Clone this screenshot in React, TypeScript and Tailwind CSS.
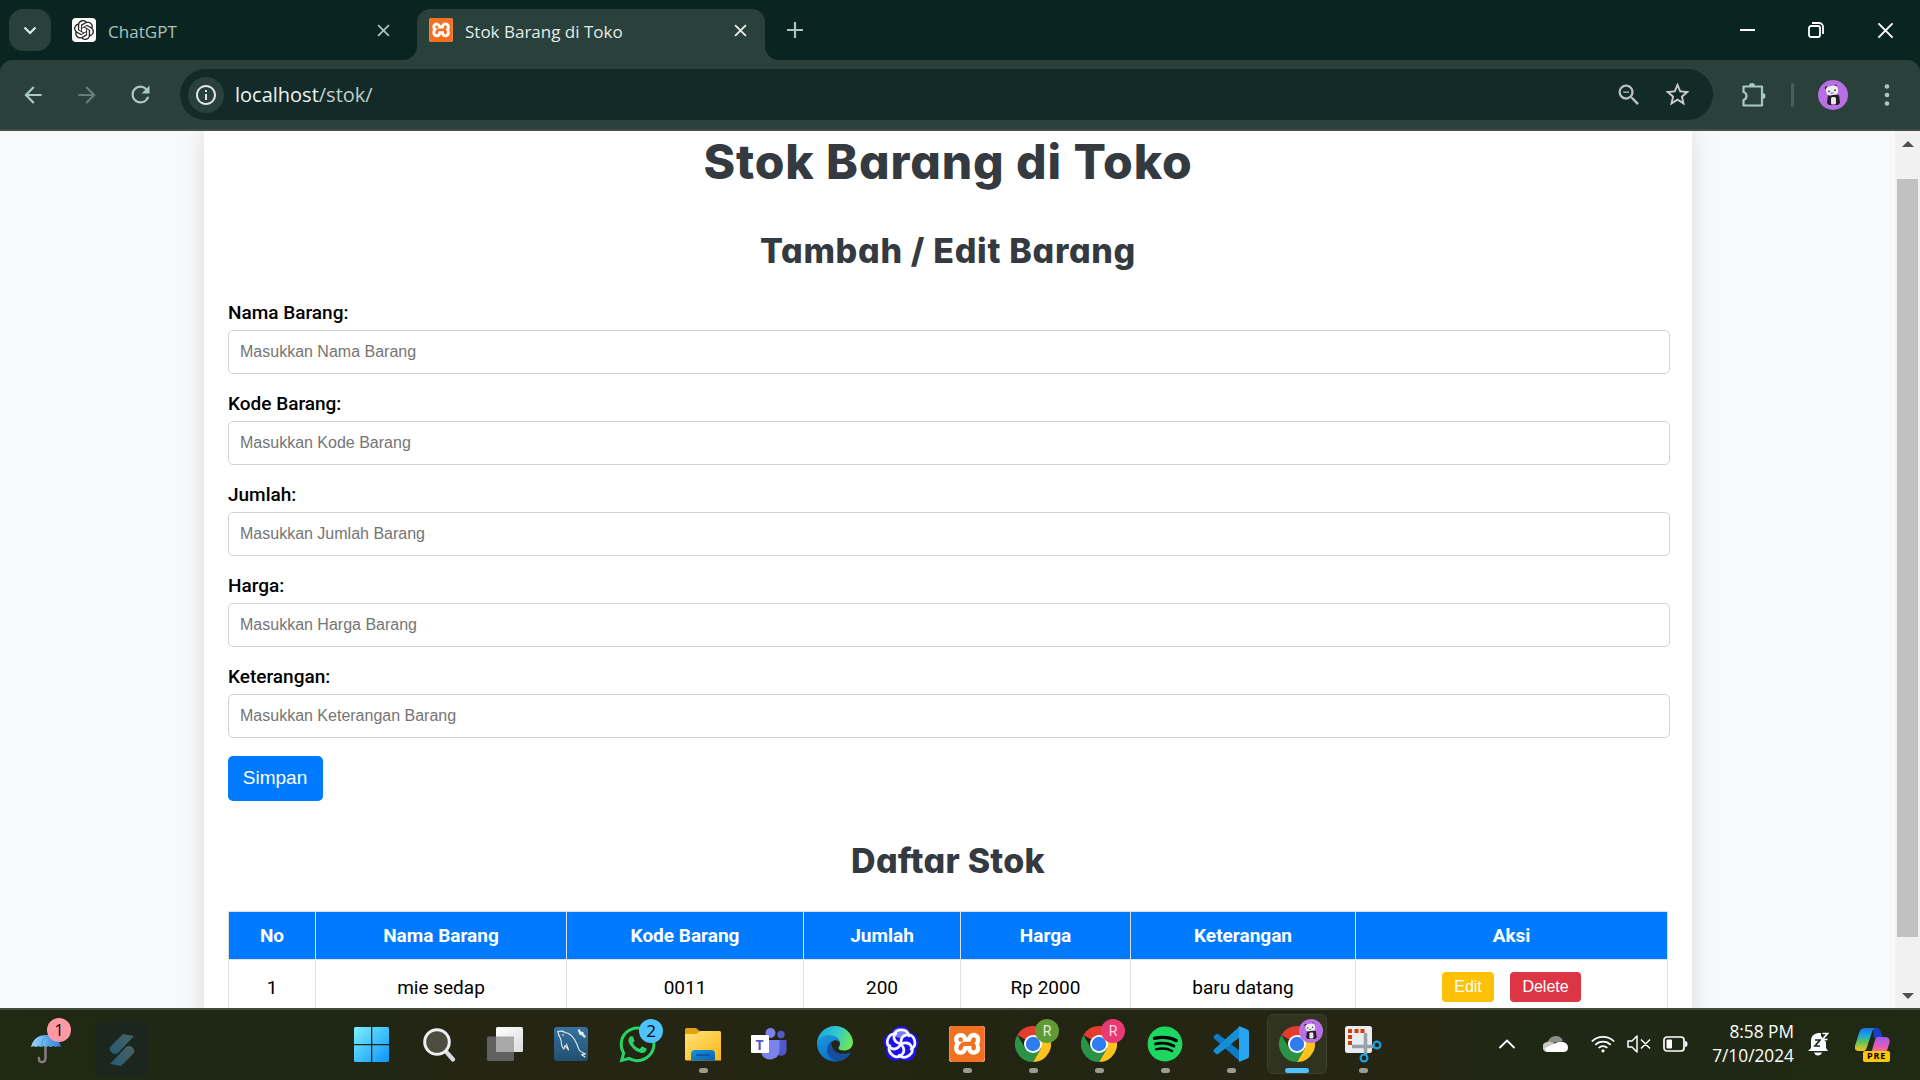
import type { ReactNode } from "react";
import { MdArrowBack, MdArrowForward, MdRefresh, MdInfoOutline, MdStarOutline, MdZoomOut } from "react-icons/md";
import { FaWhatsapp, FaSpotify } from "react-icons/fa";
import { SiOpenai, SiXampp } from "react-icons/si";

const Cross = ({ size, width, className }: { size: number; width: number; className?: string }) => (
  <svg width={size} height={size} viewBox="0 0 12 12" className={className}>
    <path d="M1 1l10 10M11 1L1 11" stroke="currentColor" strokeWidth={width} fill="none" />
  </svg>
);

const Xampp = ({ size }: { size: number }) => (
  <div className="flex items-center justify-center rounded-[3px] bg-white" style={{ width: size, height: size }}>
    <SiXampp size={size} color="#f37021" />
  </div>
);

const Panda = ({ size }: { size: number }) => (
  <svg width={size} height={size} viewBox="0 0 30 30">
    <circle cx="15" cy="15" r="15" fill="#b76fe3" />
    <circle cx="8.500" cy="8" r="1.700" fill="#2a2430" />
    <circle cx="17.500" cy="6" r="1.500" fill="#2a2430" />
    <path d="M10 15h11l1 8-2 2H11l-2-2z" fill="#221e26" />
    <rect x="13" y="17" width="5" height="7.500" rx="1.500" fill="#e9e6ee" />
    <rect x="8" y="6" width="12" height="9" rx="3.500" fill="#eeecf2" transform="rotate(-12 14 10)" />
    <circle cx="11" cy="11.300" r="0.900" fill="#333" />
    <circle cx="17" cy="10.200" r="0.900" fill="#333" />
    <path d="M12.500 13q2 .8 3-.6" stroke="#444" strokeWidth="0.800" fill="none" />
  </svg>
);

function TabStrip() {
  return (
    <div className="flex h-[60px] bg-[#0a2422] text-[#a9c4be]">
      <div className="ml-[9px] mt-[9px] flex h-[42px] w-[42px] items-center justify-center rounded-[14px] bg-[#29403b]">
        <svg width="14" height="9" viewBox="0 0 14 9">
          <path d="M1.500 1.500L7 7l5.500-5.500" stroke="#dcebe6" strokeWidth="2.200" fill="none" />
        </svg>
      </div>
      <div className="ml-[21px] flex w-[345px] items-center">
        <div className="flex h-6 w-6 items-center justify-center rounded-[4px] bg-white text-[#222]">
          <SiOpenai size={20} />
        </div>
        <span className="ml-3 pt-[3px] text-[17px] tracking-[0.05px]">ChatGPT</span>
        <Cross size={13} width={1.6} className="ml-auto mr-[27px]" />
      </div>
      <div className="relative -mr-px mt-[9px] flex h-[51px] w-[348px] items-center rounded-t-[13px] bg-[#29403b] pb-[9px] text-[#e4ece9]">
        <svg width="14" height="14" className="absolute -left-[14px] bottom-0">
          <path d="M14 0v14H0A14 14 0 0 0 14 0z" fill="#29403b" />
        </svg>
        <svg width="14" height="14" className="absolute -right-[14px] bottom-0">
          <path d="M0 0v14h14A14 14 0 0 1 0 0z" fill="#29403b" />
        </svg>
        <div className="ml-3"><Xampp size={24} /></div>
        <span className="ml-3 pt-[3px] text-[17px]">Stok Barang di Toko</span>
        <Cross size={13} width={1.8} className="ml-auto mr-[18px]" />
      </div>
      <div className="ml-[23px] flex items-center">
        <svg width="16" height="16" viewBox="0 0 16 16"><path d="M8 0v16M0 8h16" stroke="currentColor" strokeWidth="2.200" /></svg>
      </div>
      <div className="ml-auto mr-[26px] flex items-center text-white">
        <div className="mr-[53px] h-[2px] w-[15px] bg-white" />
        <svg width="16" height="16" viewBox="0 0 16 16" className="mr-[53px]" fill="none" stroke="currentColor" strokeWidth="1.800">
          <rect x="1" y="4" width="11" height="11" rx="2" />
          <path d="M4 1h7a4 4 0 0 1 4 4v7" />
        </svg>
        <Cross size={17} width={1.4} />
      </div>
    </div>
  );
}

function Toolbar() {
  return (
    <div className="bg-[#0a2422]">
      <div className="flex h-[69px] items-center rounded-t-[12px] bg-[#29403b] text-[#a9c9c0]">
        <MdArrowBack size={26} className="ml-5" />
        <MdArrowForward size={26} className="ml-7 text-[#65807a]" />
        <MdRefresh size={27} className="ml-[27px]" />
        <div className="ml-[26px] flex h-[51px] w-[1533px] items-center rounded-full bg-[#122b28] pl-2">
          <div className="flex h-9 w-9 items-center justify-center rounded-full bg-[#29403b]">
            <MdInfoOutline size={24} color="#dfe6e4" />
          </div>
          <span className="ml-[11px] text-[20px] text-[#c3cecb]"><span className="text-[#eef3f2]">localhost</span>/stok/</span>
          <MdZoomOut size={28} color="#b9c2c0" className="ml-auto mr-5" />
          <MdStarOutline size={29} color="#c4cbc9" className="mr-[21px]" />
        </div>
        <svg width="26" height="26" viewBox="0 0 26 26" className="ml-[27px]">
          <path d="M3.500 4.500h18.500v19H3.500v-5.500q3-1 3-4t-3-4z" fill="none" stroke="currentColor" strokeWidth="2.200" strokeLinejoin="round" />
          <path d="M9 4a3 3 0 0 1 6 0zM22.500 11a3 3 0 0 1 0 6z" fill="currentColor" />
        </svg>
        <div className="ml-[25px] h-6 w-[3px] rounded bg-[#45605a]" />
        <div className="ml-6"><Panda size={30} /></div>
        <svg width="6" height="24" viewBox="0 0 6 24" className="ml-[36px]" fill="currentColor">
          <circle cx="3" cy="3.500" r="2.300" /><circle cx="3" cy="12" r="2.300" /><circle cx="3" cy="20.500" r="2.300" />
        </svg>
      </div>
      <div className="h-[2px] bg-[#454d4a]" />
    </div>
  );
}

const fields = ["Nama Barang", "Kode Barang", "Jumlah", "Harga", "Keterangan"];
const hints = ["Masukkan Nama Barang", "Masukkan Kode Barang", "Masukkan Jumlah Barang", "Masukkan Harga Barang", "Masukkan Keterangan Barang"];
const heads = ["No", "Nama Barang", "Kode Barang", "Jumlah", "Harga", "Keterangan", "Aksi"];
const cells = ["1", "mie sedap", "0011", "200", "Rp 2000", "baru datang"];
const cols = "grid grid-cols-[87px_251px_237px_157px_170px_225px_312px]";

function Page() {
  return (
    <div className="flex h-[877px] overflow-hidden bg-[#f8f9fb]">
      <div className="ml-[204px] h-[900px] w-[1488px] bg-white px-6 pt-[7px] text-black shadow-[0_0_24px_rgba(0,0,0,0.12)]">
        <h1 className="text-center font-['Inter'] text-[48px] font-extrabold leading-[48px] tracking-[0.900px] text-[#343a40] [font-feature-settings:'cv11']">Stok Barang di Toko</h1>
        <h2 className="mt-[48px] text-center font-['Inter'] text-[34px] font-extrabold leading-[34px] tracking-[0.700px] text-[#343a40] [font-feature-settings:'cv11']">Tambah / Edit Barang</h2>
        <form className="mt-[33px] w-[1442px]">
          {fields.map((f, i) => (
            <div key={f} className="mb-[18px]">
              <label className="mb-[5px] block font-['Roboto'] text-[19px] font-medium leading-6">{f}:</label>
              <input placeholder={hints[i]} className="block h-[44px] w-full rounded-[5px] border border-[#ced4da] bg-white px-[11px] pb-px font-['Liberation_Sans'] text-[16px] placeholder:text-[#757575]" />
            </div>
          ))}
          <button type="button" className="block h-[45px] w-[95px] rounded-[5px] bg-[#007bff] pr-px font-['Liberation_Sans'] text-[19px] text-white">Simpan</button>
        </form>
        <h2 className="mt-[43px] text-center font-['Inter'] text-[34px] font-extrabold leading-[34px] tracking-[0.250px] text-[#343a40] [font-feature-settings:'cv11']">Daftar Stok</h2>
        <div className="mt-[33px] w-[1440px] border-l border-t border-[#dee2e6] font-['Roboto'] text-[19px]">
          <div className={cols}>
            {heads.map((h) => (
              <div key={h} className="flex h-12 items-center justify-center border-b border-r border-[#dee2e6] bg-[#007bff] pt-[2px] font-bold text-white">{h}</div>
            ))}
          </div>
          <div className={cols}>
            {cells.map((c) => (
              <div key={c} className="flex h-[56px] items-center justify-center border-b border-r border-[#dee2e6] pt-[2px]">{c}</div>
            ))}
            <div className="flex h-[56px] items-center justify-center gap-4 border-r border-[#dee2e6] pb-[3px] font-['Liberation_Sans'] text-[16px] text-white">
              <button className="h-[30px] w-[52px] rounded-[4px] bg-[#ffc107] pt-px">Edit</button>
              <button className="h-[30px] w-[71px] rounded-[4px] bg-[#dc3545] pt-px">Delete</button>
            </div>
          </div>
        </div>
      </div>
      <div className="ml-auto flex h-[877px] w-[25px] flex-col items-center bg-[#f1f1f1]">
        <svg width="12" height="6" viewBox="0 0 12 6" className="mt-[10px]"><path d="M0 6L6 0l6 6z" fill="#505050" /></svg>
        <div className="mt-[32px] h-[758px] w-[21px] bg-[#c1c1c1]" />
        <svg width="12" height="6" viewBox="0 0 12 6" className="mt-[56px]"><path d="M0 0l6 6 6-6z" fill="#505050" /></svg>
      </div>
    </div>
  );
}

const Chrome = () => (
  <svg width="36" height="36" viewBox="0 0 36 36">
    <path d="M18 18L2.400 9A18 18 0 0 1 33.600 9z" fill="#e33b2e" />
    <path d="M18 9h15.600A18 18 0 0 1 18 36l7.800-13.500z" fill="#fcc31e" />
    <path d="M10.200 22.500L2.400 9A18 18 0 0 0 18 36l7.800-13.500z" fill="#2a9346" />
    <circle cx="18" cy="18" r="9" fill="#fff" />
    <circle cx="18" cy="18" r="7.200" fill="#2f7bf0" />
  </svg>
);

const Badge = ({ children, className }: { children: ReactNode; className: string }) => (
  <div className={"absolute flex h-6 w-6 items-center justify-center rounded-full " + className}>{children}</div>
);

function Task({ children, state }: { children: ReactNode; state?: "open" | "active" }) {
  return (
    <div className="relative flex h-[70px] w-[66px] flex-col items-center">
      <div className={state === "active" ? "mt-1 flex h-[60px] w-[60px] justify-center rounded-[6px] border border-[#3d402d] bg-[#303320] pt-[11px]" : "mt-4 flex h-[48px] justify-center"}>
        {children}
      </div>
      {state === "open" && <div className="-mt-[6px] h-[5px] w-[9px] rounded-full bg-[#9a9b91]" />}
      {state === "active" && <div className="-mt-[6px] h-[5px] w-6 rounded-full bg-[#4cc2ff]" />}
    </div>
  );
}

const Windows = () => (
  <svg width="36" height="36" viewBox="0 0 36 36" className="-ml-[3px] mt-px">
    <defs><linearGradient id="win" x1="0" y1="0" x2="1" y2="1"><stop stopColor="#7cf1ff" /><stop offset="1" stopColor="#0a94fa" /></linearGradient></defs>
    <path d="M1.500 0H17v17H0V1.500Q0 0 1.500 0zM18.300 0H33.500Q35 0 35 1.500V17H18.300zM0 18.300h17V35H1.500Q0 35 0 33.500zM18.300 18.300H35v15.200q0 1.500-1.500 1.500H18.300z" fill="url(#win)" />
  </svg>
);

const Search = () => (
  <svg width="34" height="36" viewBox="0 0 34 36">
    <path d="M23.500 25l7.500 8.500" stroke="#d9dbe0" strokeWidth="4.200" strokeLinecap="round" />
    <circle cx="15" cy="16" r="12.300" fill="#4c4d3e" stroke="#eeeff2" strokeWidth="3" />
  </svg>
);

const TaskView = () => (
  <svg width="36" height="36" viewBox="0 0 36 36">
    <defs><linearGradient id="tv" x1="0" y1="0" x2="1" y2="1"><stop stopColor="#fff" /><stop offset="1" stopColor="#dcdcdc" /></linearGradient></defs>
    <rect x="0" y="10.500" width="27" height="24.500" rx="1.500" fill="#616161" />
    <rect x="9" y="1" width="27" height="25" rx="1.500" fill="url(#tv)" />
    <path d="M9 10.500h18V26H9z" fill="#a8a8a8" />
  </svg>
);

const Workbench = () => (
  <svg width="36" height="36" viewBox="0 0 36 36">
    <defs><linearGradient id="wb" x1="0" y1="0" x2="0" y2="1"><stop stopColor="#37729f" /><stop offset="1" stopColor="#21506f" /></linearGradient></defs>
    <rect x="1" y="1" width="34" height="34" rx="3" fill="url(#wb)" />
    <g fill="none" stroke="#e6eef4" strokeWidth="1.100" strokeLinejoin="round" strokeLinecap="round">
      <path d="M5 5.500q4-1 7 1 6 1 9.500 7 3 5 4 9 1 3 4 4l3 1.500-4 .5 3.500 2.500" />
      <path d="M5 5.500q0 3 2 6 1.500 3 1.500 6.500 0 3 2.500 5l1-3.500 3.500 4.500-2-6" />
    </g>
    <circle cx="10" cy="9" r="0.800" fill="#fff" />
    <path d="M26 4.500l1.500 3 2-.5M27.500 6.500l4 4" stroke="#e6eef4" strokeWidth="2.400" fill="none" strokeLinecap="round" />
  </svg>
);

const Folder = () => (
  <svg width="36" height="36" viewBox="0 0 36 36">
    <defs>
      <linearGradient id="fo" x1="0" y1="0" x2="1" y2="1"><stop stopColor="#ffe17d" /><stop offset="1" stopColor="#fdb813" /></linearGradient>
      <linearGradient id="fb" x1="0" y1="0" x2="1" y2="1"><stop stopColor="#1893dd" /><stop offset="1" stopColor="#0a61b4" /></linearGradient>
    </defs>
    <path d="M0 3.500Q0 2 1.500 2H11l4 3.500V14H0z" fill="#e2a20b" />
    <path d="M0 8h11.500L15 5h19.500Q36 5 36 6.500v28H1.500Q0 34.500 0 33z" fill="url(#fo)" />
    <path d="M6 34.500V28q0-4 4-4h16q4 0 4 4v6.500z" fill="url(#fb)" />
    <path d="M11 29.200h14" stroke="#08559b" strokeWidth="1.800" />
  </svg>
);

const Teams = () => (
  <div className="relative -ml-px h-9 w-9">
    <svg width="36" height="36" viewBox="0 0 36 36">
      <circle cx="19.500" cy="7" r="5" fill="#7b83eb" /><circle cx="30" cy="8.500" r="3.700" fill="#5059c9" />
      <path d="M26 14h9.500v10a5.500 5.500 0 0 1-9.500 4z" fill="#5059c9" />
      <path d="M13 14h15.500v11a9.500 9.500 0 0 1-18 3z" fill="#7b83eb" />
    </svg>
    <div className="absolute left-0 top-[9px] flex h-[18px] w-[18px] items-center justify-center rounded-[1px] bg-white text-[14px] font-bold text-[#5059c9]">T</div>
  </div>
);

const Edge = () => (
  <svg width="36" height="36" viewBox="0 0 36 36">
    <defs>
      <linearGradient id="ea" x1="0" y1="0.300" x2="1" y2="0.600"><stop stopColor="#1aa6df" /><stop offset="0.500" stopColor="#32c8cc" /><stop offset="1" stopColor="#72e84f" /></linearGradient>
      <linearGradient id="eb" x1="0" y1="0" x2="0.600" y2="1"><stop stopColor="#1a9cdd" /><stop offset="1" stopColor="#0a6cce" /></linearGradient>
    </defs>
    <path d="M18 0a18 18 0 0 1 18 16c0 6-4.500 8.500-9 8.500-3 0-5.500-.7-5.500-2.500 0-1 1.500-1.700 1.500-4.500 0-4-4-6.500-9-6.500C7 11 2 14 0 18 0 8 8 0 18 0z" fill="url(#ea)" />
    <path d="M0 18C1 12.500 6 9 12 9c6 0 11 3.500 11 8.500-1-3-4-4-6-3-6 2-7 9-3 14 3 4 9 5 13 4.500A18 18 0 0 1 0 18z" fill="url(#eb)" />
    <path d="M14.500 15.500C8 20 9 29 15 33q5 3 10.500 1.200 5-2 8-7c.4-.8-.4-1.200-1-.8-5 2.300-11 2-15-2-2.500-2.600-3.500-5.500-3-8.900z" fill="#124f9c" />
  </svg>
);

const Knot = () => (
  <svg width="36" height="36" viewBox="0 0 36 36">
    <g fill="#1d12ee"><circle cx="18" cy="10" r="10" /><circle cx="26" cy="16" r="9.500" /><circle cx="23.500" cy="25.500" r="9.500" /><circle cx="12.500" cy="25.500" r="9.500" /><circle cx="10" cy="16" r="9.500" /></g>
    <ellipse cx="18" cy="7" rx="8" ry="5" fill="#7d79f7" />
    <g fill="none" stroke="#f6f6ff" strokeWidth="2.700" strokeLinecap="round">
      <path d="M18 18q-8-2-7-8 1-6 7-6 7 0 8 6" />
      <path d="M18 18q-8-2-7-8 1-6 7-6 7 0 8 6" transform="rotate(72 18 18)" />
      <path d="M18 18q-8-2-7-8 1-6 7-6 7 0 8 6" transform="rotate(144 18 18)" />
      <path d="M18 18q-8-2-7-8 1-6 7-6 7 0 8 6" transform="rotate(216 18 18)" />
      <path d="M18 18q-8-2-7-8 1-6 7-6 7 0 8 6" transform="rotate(288 18 18)" />
    </g>
  </svg>
);

const Code = () => (
  <svg width="36" height="36" viewBox="0 0 36 36">
    <path d="M1 9.800L3.500 8q1-.6 2 .2L27 25v10.500L1 12.500q-1-1.400 0-2.700z" fill="#0b7bc4" />
    <path d="M1 26.200L3.500 28q1 .6 2-.2L27 11V0L1 23.500q-1 1.400 0 2.700z" fill="#148fd8" />
    <path d="M26 0l8.500 3.500Q36 4 36 6v24q0 2-1.500 2.600L26 36z" fill="#27a4f2" />
  </svg>
);

const Snip = () => (
  <svg width="37" height="37" viewBox="0 0 37 37">
    <rect x="0" y="0" width="27" height="27" rx="2.500" fill="#e9edf2" />
    <g fill="#d83b01"><path d="M3 3h4v4H3zM9.500 3h4v4h-4zM15.500 3h4v4h-4zM3 9h4v4H3zM3 15h4v4H3z" /></g>
    <path d="M20.500 7v22M7 20.500h22" stroke="#9aa1a9" strokeWidth="3.500" />
    <circle cx="32" cy="19" r="3.400" fill="none" stroke="#1b9de2" strokeWidth="2.200" />
    <circle cx="19" cy="32" r="3.400" fill="none" stroke="#1b9de2" strokeWidth="2.200" />
  </svg>
);

function Taskbar() {
  return (
    <div className="h-[72px]">
      <div className="h-[2px] bg-[#454a3b]" />
      <div className="flex h-[70px] bg-[linear-gradient(90deg,#202913_0%,#1f2815_18%,#252513_24%,#232513_50%,#252513_74%,#1f2815_80%,#202913_100%)]">
        <div className="flex w-[340px]">
          <div className="relative h-[70px] w-[95px]">
            <svg width="34" height="32" viewBox="0 0 34 32" className="ml-[30px] mt-[22px]">
              <defs><linearGradient id="um" x1="0" y1="0" x2="1" y2="0"><stop stopColor="#9bd4fb" /><stop offset="1" stopColor="#2b83dc" /></linearGradient></defs>
              <path d="M15.500 14v12q0 4-3.500 4t-3-4" stroke="#857d7c" strokeWidth="2.500" fill="none" strokeLinecap="round" />
              <path d="M1 15Q4 3 16 3t15 12q-3-1.500-5 0-2.500-1.500-5 0-2.500-1.500-5 0-2.500-1.500-5 0-2.500-1.500-5 0-2.500-1.500-5 0z" fill="url(#um)" />
              <path d="M11 15q1-8 5-12 4 4 5 12" stroke="#4e9fe4" fill="none" />
            </svg>
            <Badge className="left-[47px] top-[8px] bg-[#ff99a4] text-[16px] text-black">1</Badge>
          </div>
          <div className="mt-3 flex h-[55px] w-[54px] items-center justify-center rounded-[8px] bg-[#1b261e]">
            <svg width="26" height="34" viewBox="0 0 26 34">
              <defs><linearGradient id="st" x1="0" y1="1" x2="1" y2="0"><stop stopColor="#245a78" /><stop offset="1" stopColor="#4c625d" /></linearGradient></defs>
              <path d="M14 1l11 2L9 20q-3 2-6 0-4-4-1-7z" fill="url(#st)" />
              <path d="M12 33L1 31l16-17q3-2 6 0 4 4 1 7z" fill="url(#st)" />
            </svg>
          </div>
        </div>
        <Task><Windows /></Task>
        <Task><Search /></Task>
        <Task><TaskView /></Task>
        <Task><Workbench /></Task>
        <Task><FaWhatsapp size={41} color="#25d366" className="-mt-[2px]" /><Badge className="left-[35px] top-[9px] bg-[#4cc2ff] text-[17px] text-black">2</Badge></Task>
        <Task state="open"><Folder /></Task>
        <Task><Teams /></Task>
        <Task><Edge /></Task>
        <Task><Knot /></Task>
        <Task state="open"><Xampp size={36} /></Task>
        <Task state="open"><Chrome /><Badge className="left-[35px] top-[9px] bg-[#5f9a35] font-['Roboto'] text-[14px] text-[#e6f0dc]">R</Badge></Task>
        <Task state="open"><Chrome /><Badge className="left-[35px] top-[9px] bg-[#e93a76] font-['Roboto'] text-[14px] text-[#fbd9e6]">R</Badge></Task>
        <Task state="open"><div className="h-9 w-9 rounded-full bg-[radial-gradient(#000_60%,transparent_61%)]"><FaSpotify size={36} color="#1ed760" /></div></Task>
        <Task state="open"><Code /></Task>
        <Task state="active"><Chrome /><Badge className="left-[35px] top-[9px]"><Panda size={24} /></Badge></Task>
        <Task state="open"><Snip /></Task>
        <div className="ml-auto flex h-[68px] items-center text-white">
          <svg width="18" height="10" viewBox="0 0 18 10"><path d="M1.500 9L9 1.500 16.500 9" stroke="currentColor" strokeWidth="1.800" fill="none" /></svg>
          <svg width="25" height="16" viewBox="0 0 25 16" className="ml-[27px]">
            <path d="M4 8q2-8 9-8 5 0 7 5z" fill="#8b8e84" /><path d="M5 16a5 5 0 0 1-1-10q5-1 8 2l8 4z" fill="#c8cac4" /><path d="M5 16q-3-1-3-4l11-5q3-2 7-1 5 1 5 5.500T20 16z" fill="#fff" />
          </svg>
          <svg width="24" height="18" viewBox="0 0 24 18" className="ml-[23px]" fill="none" stroke="currentColor" strokeWidth="1.700">
            <path d="M.8 6.500a15.800 15.800 0 0 1 22.400 0M4.300 9.800a11 11 0 0 1 15.400 0M7.600 13a6.300 6.300 0 0 1 8.800 0" /><circle cx="12" cy="15.800" r="1.600" fill="currentColor" stroke="none" />
          </svg>
          <svg width="24" height="18" viewBox="0 0 24 18" className="ml-[12px]" fill="none" stroke="currentColor" strokeWidth="1.500">
            <path d="M1 6h4l5-5v16l-5-5H1zM14 4.500l9 9M23 4.500l-9 9" strokeLinejoin="round" />
          </svg>
          <svg width="25" height="16" viewBox="0 0 25 16" className="ml-[12px]">
            <rect x="1" y="1" width="20" height="14" rx="3" fill="none" stroke="currentColor" strokeWidth="1.700" /><rect x="3.500" y="3.500" width="5.500" height="9" rx="1" fill="currentColor" /><path d="M22 5q2.500 0 2.500 3T22 11z" fill="currentColor" />
          </svg>
          <div className="ml-[21px] w-[85px] text-right text-[17.300px] leading-6">8:58 PM<br />7/10/2024</div>
          <svg width="22" height="24" viewBox="0 0 22 24" className="ml-[14px]">
            <path d="M3 16V9q0-7 7-8l3 0v3l5 6v6l2 3H0zM6 20.500h8q-1 3-4 3t-4-3z" fill="currentColor" />
            <path d="M7 8h5l-5 6h5" fill="none" stroke="#1f2815" strokeWidth="1.700" />
            <path d="M14.500 1.500h5l-5 6h5" fill="none" stroke="currentColor" strokeWidth="1.700" />
          </svg>
          <div className="relative ml-[25px] mr-[30px] h-[35px] w-[35px]">
            <svg width="35" height="30" viewBox="0 0 35 30">
              <defs>
                <linearGradient id="ca" x1="0" y1="0" x2="0" y2="1"><stop stopColor="#1f6fe0" /><stop offset="0.300" stopColor="#1aa5e8" /><stop offset="0.600" stopColor="#5fc05d" /><stop offset="1" stopColor="#f5c51c" /></linearGradient>
                <linearGradient id="cb" x1="0" y1="0" x2="0" y2="1"><stop stopColor="#9a5cf0" /><stop offset="0.500" stopColor="#e55bb5" /><stop offset="1" stopColor="#fb8a5c" /></linearGradient>
              </defs>
              <path d="M18 1h3q4 0 5 4l2 6h-9z" fill="#1740c4" />
              <path d="M10 1h11q-3 0-4 4l-5 15q-1 4-4 4H4q-5 0-4-5L4 6q1.500-5 6-5z" fill="url(#ca)" />
              <path d="M22 10h8q5.500 0 4.500 6l-3 9q-1 4-6 4H12q3 0 4.500-4L20 13q1-3 2-3z" fill="url(#cb)" />
            </svg>
            <div className="absolute bottom-0 left-2 flex h-[11px] w-[27px] items-center justify-center rounded-[2px] bg-[#ffc60b] text-[9px] font-bold tracking-[0.800px] text-black">PRE</div>
          </div>
        </div>
      </div>
    </div>
  );
}

export default function App() {
  return (
    <div className="h-[1080px] w-[1920px] overflow-hidden font-['Open_Sans',sans-serif]">
      <TabStrip />
      <Toolbar />
      <Page />
      <Taskbar />
    </div>
  );
}
